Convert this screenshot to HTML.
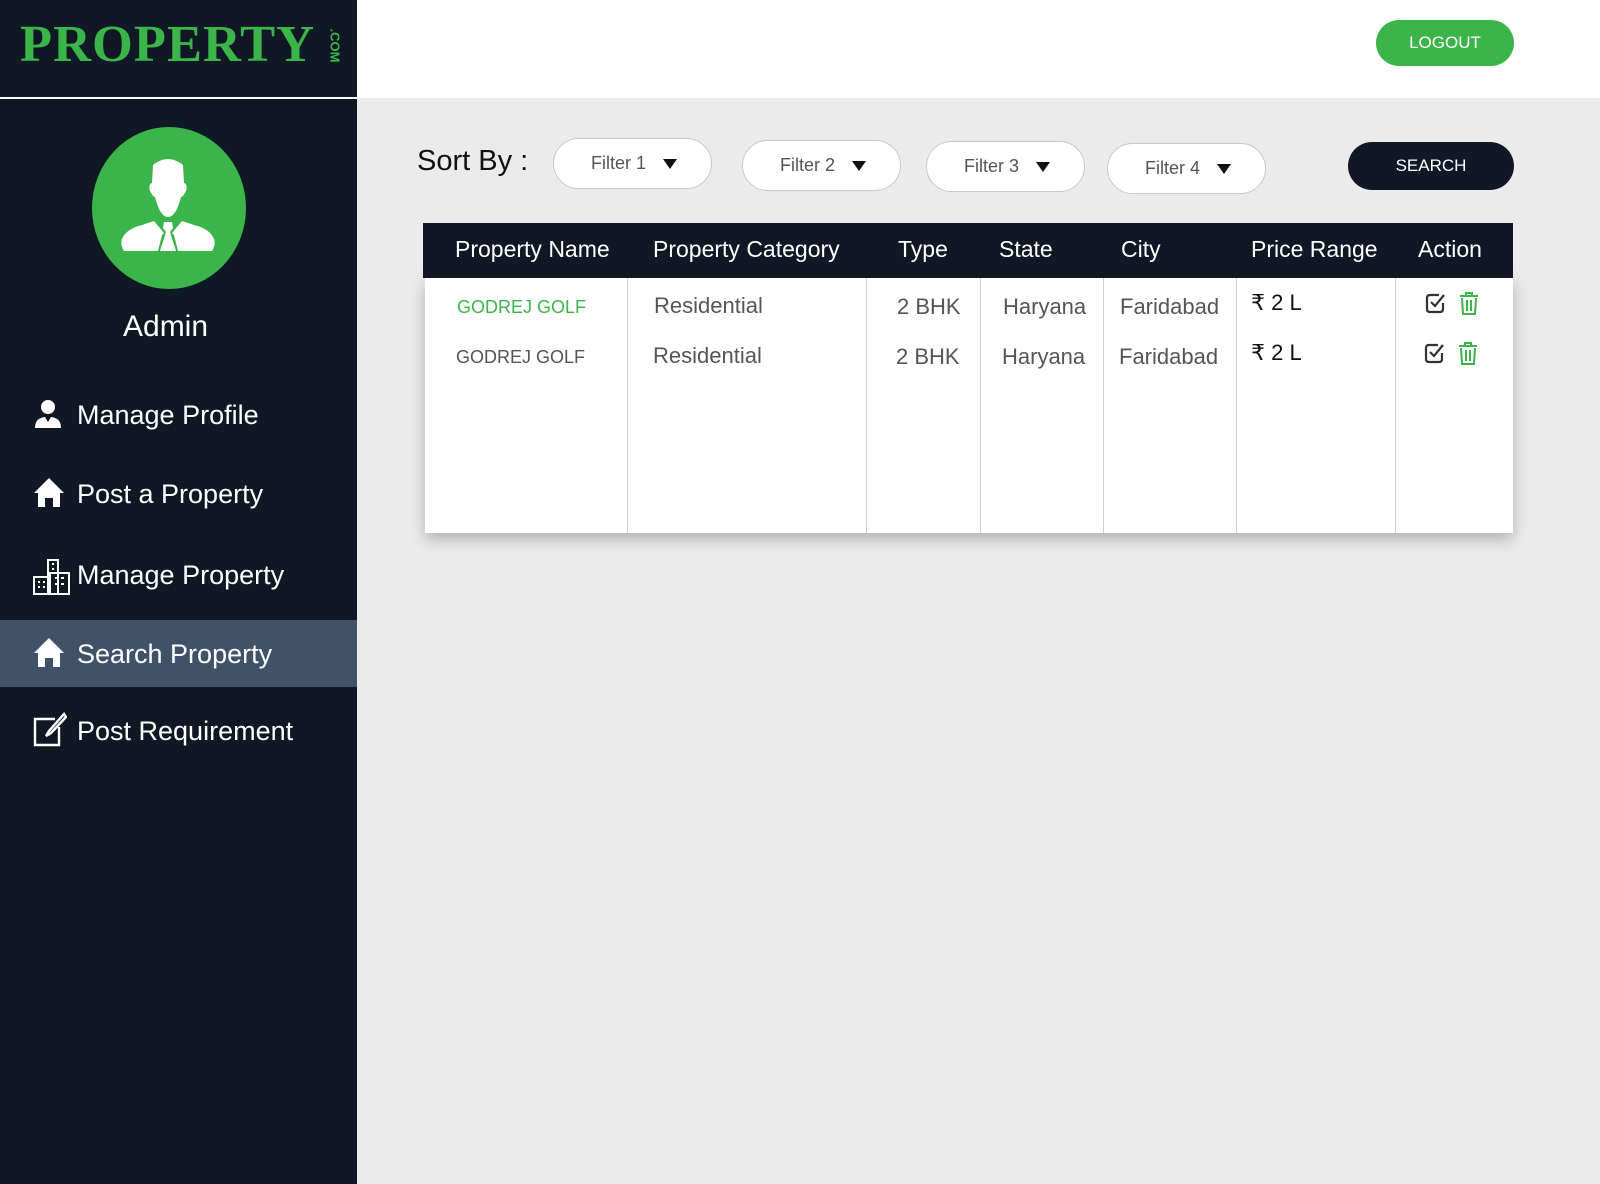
<!DOCTYPE html>
<html><head><meta charset="utf-8"><style>
*{margin:0;padding:0;box-sizing:border-box}
body{width:1600px;height:1184px;background:#ebebeb;font-family:"Liberation Sans",sans-serif;position:relative;overflow:hidden}
.a{position:absolute;white-space:nowrap}
#side{position:absolute;left:0;top:0;width:357px;height:1184px;background:#101825}
#top{position:absolute;left:357px;top:0;width:1243px;height:98px;background:#fff}
.menu{position:absolute;left:77px;color:#fff;font-size:27px;line-height:30px}
.ico{position:absolute;left:33px}
.filt{position:absolute;height:51px;width:159px;border:1px solid #c8c8c8;border-radius:26px;background:#fff;color:#555;font-size:18px;line-height:49px;padding-left:37px}
.filt:after{content:"";position:absolute;right:34px;top:20px;border-left:7px solid transparent;border-right:7px solid transparent;border-top:10px solid #111}
.th{position:absolute;top:236px;color:#fff;font-size:23px}
.cell{position:absolute;font-size:22px;color:#555}
.vl{position:absolute;top:278px;height:255px;width:1px;background:#cfcfcf}
</style></head><body>
<div id="side"></div>
<div id="top"></div>
<div class="a" style="left:0;top:97px;width:357px;height:2px;background:#fff"></div>
<div class="a" style="left:20px;top:15px;font-family:'Liberation Serif',serif;font-weight:bold;font-size:52px;color:#3bb54a;letter-spacing:1px;transform:scaleX(1.01);transform-origin:left">PROPERTY</div>
<div class="a" style="left:318px;top:38px;font-size:13px;font-weight:bold;color:#3bb54a;transform:rotate(90deg);transform-origin:center">.COM</div>

<div class="a" style="left:92px;top:127px;width:154px;height:162px;border-radius:50%;background:#3bb54a"></div>
<svg class="a" style="left:120px;top:155px" width="96" height="104" viewBox="0 0 96 104">
<path fill="#fff" d="M33 10 Q48 -2 63 10 L64 28 Q68 29 66 36 Q63 42 61 42 Q56 62 48 62 Q40 62 35 42 Q33 42 30 36 Q28 29 32 28 Z"/>
<path fill="#fff" d="M34 66 L44 78 L42 80 L38 96 L4 96 Q0 90 2 84 Q6 74 22 70 Z M62 66 L52 78 L54 80 L58 96 L92 96 Q96 90 94 84 Q90 74 74 70 Z M44 67 L52 67 L53 73 L50 77 L56 96 L40 96 L46 77 L43 73 Z"/>
</svg>
<div class="a" style="left:123px;top:310px;color:#fff;font-size:30px">Admin</div>

<div class="a" style="left:0;top:620px;width:357px;height:67px;background:#415268"></div>
<svg class="ico" style="top:398px" width="30" height="32" viewBox="0 0 30 32"><circle cx="15" cy="9" r="7" fill="#fff"/><path d="M2 30 Q2 20 12 19 L15 24 L18 19 Q28 20 28 30 Z" fill="#fff"/></svg>
<div class="menu" style="top:400px">Manage Profile</div>
<svg class="ico" style="top:476px" width="32" height="32" viewBox="0 0 32 32"><path d="M16 2 L31 17 L27 17 L27 31 L20 31 L20 22 L12 22 L12 31 L5 31 L5 17 L1 17 Z" fill="#fff"/></svg>
<div class="menu" style="top:479px">Post a Property</div>
<svg class="ico" style="top:559px" width="37" height="36" viewBox="0 0 37 36" fill="none" stroke="#fff" stroke-width="2"><rect x="1" y="18" width="14" height="17"/><rect x="15" y="1" width="10" height="34"/><rect x="17" y="14" width="19" height="21"/><path d="M5 23h2M10 23h2M5 28h2M10 28h2M19 5h2M19 10h2M22 19h3M28 19h3M22 25h3M28 25h3"/></svg>
<div class="menu" style="top:560px">Manage Property</div>
<svg class="ico" style="top:636px" width="32" height="32" viewBox="0 0 32 32"><path d="M16 2 L31 17 L27 17 L27 31 L20 31 L20 22 L12 22 L12 31 L5 31 L5 17 L1 17 Z" fill="#fff"/></svg>
<div class="menu" style="top:639px">Search Property</div>
<svg class="ico" style="top:711px" width="34" height="36" viewBox="0 0 34 36" fill="none" stroke="#fff" stroke-width="2.4"><path d="M22 8 H2 V34 H26 V16"/><path d="M31 3 L16 20 L13 25 L18 22 L33 6 Z"/></svg>
<div class="menu" style="top:716px">Post Requirement</div>

<div class="a" style="left:1376px;top:20px;width:138px;height:46px;border-radius:23px;background:#3bb54a;color:#fff;font-size:17px;line-height:46px;text-align:center">LOGOUT</div>

<div class="a" style="left:417px;top:145px;font-size:29px;color:#111">Sort By :</div>
<div class="filt" style="left:553px;top:138px">Filter 1</div>
<div class="filt" style="left:742px;top:140px">Filter 2</div>
<div class="filt" style="left:926px;top:141px">Filter 3</div>
<div class="filt" style="left:1107px;top:143px">Filter 4</div>
<div class="a" style="left:1348px;top:142px;width:166px;height:48px;border-radius:24px;background:#101825;color:#fff;font-size:17px;line-height:48px;text-align:center">SEARCH</div>

<div class="a" style="left:425px;top:278px;width:1088px;height:255px;background:#fff;box-shadow:0 6px 14px rgba(0,0,0,.25)"></div>
<div class="a" style="left:423px;top:223px;width:1090px;height:55px;background:#101825"></div>
<div class="th" style="left:455px">Property Name</div>
<div class="th" style="left:653px">Property Category</div>
<div class="th" style="left:898px">Type</div>
<div class="th" style="left:999px">State</div>
<div class="th" style="left:1121px">City</div>
<div class="th" style="left:1251px">Price Range</div>
<div class="th" style="left:1418px">Action</div>
<div class="vl" style="left:627px"></div><div class="vl" style="left:866px"></div><div class="vl" style="left:980px"></div><div class="vl" style="left:1103px"></div><div class="vl" style="left:1236px"></div><div class="vl" style="left:1395px"></div>

<div class="cell" style="left:457px;top:297px;font-size:18px;color:#3bb54a">GODREJ GOLF</div>
<div class="cell" style="left:456px;top:347px;font-size:18px">GODREJ GOLF</div>
<div class="cell" style="left:654px;top:293px">Residential</div>
<div class="cell" style="left:653px;top:343px">Residential</div>
<div class="cell" style="left:897px;top:294px">2 BHK</div>
<div class="cell" style="left:896px;top:344px">2 BHK</div>
<div class="cell" style="left:1003px;top:294px">Haryana</div>
<div class="cell" style="left:1002px;top:344px">Haryana</div>
<div class="cell" style="left:1120px;top:294px">Faridabad</div>
<div class="cell" style="left:1119px;top:344px">Faridabad</div>
<div class="cell" style="left:1251px;top:290px;color:#111">₹ 2 L</div>
<div class="cell" style="left:1251px;top:340px;color:#111">₹ 2 L</div>
<svg class="a" style="left:1425px;top:292px" width="22" height="22" viewBox="0 0 22 22" fill="none" stroke="#333" stroke-width="2.2"><path d="M18 11 V17 Q18 20 15 20 H5 Q2 20 2 17 V6 Q2 3 5 3 H14"/><path d="M6 10 L10 14 L19 3"/></svg>
<svg class="a" style="left:1459px;top:292px" width="20" height="24" viewBox="0 0 20 24" fill="none" stroke="#3bb54a" stroke-width="2"><path d="M1 4 H19 M7 4 V1 H13 V4 M3 6 L4 22 H16 L17 6 M8 8 V19 M12 8 V19"/></svg>
<svg class="a" style="left:1424px;top:342px" width="22" height="22" viewBox="0 0 22 22" fill="none" stroke="#333" stroke-width="2.2"><path d="M18 11 V17 Q18 20 15 20 H5 Q2 20 2 17 V6 Q2 3 5 3 H14"/><path d="M6 10 L10 14 L19 3"/></svg>
<svg class="a" style="left:1458px;top:342px" width="20" height="24" viewBox="0 0 20 24" fill="none" stroke="#3bb54a" stroke-width="2"><path d="M1 4 H19 M7 4 V1 H13 V4 M3 6 L4 22 H16 L17 6 M8 8 V19 M12 8 V19"/></svg>
</body></html>
